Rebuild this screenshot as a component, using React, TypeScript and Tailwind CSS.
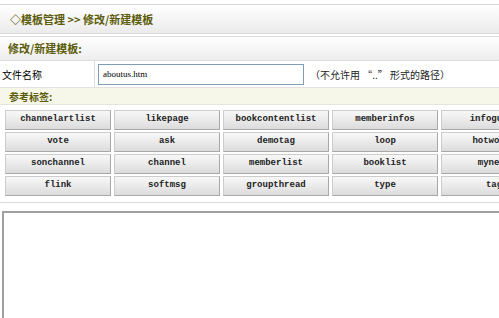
import React from 'react';

const tags: string[] = [
    'channelartlist', 'likepage', 'bookcontentlist', 'memberinfos', 'infoguide',
    'vote', 'ask', 'demotag', 'loop', 'hotwords',
    'sonchannel', 'channel', 'memberlist', 'booklist', 'mynews',
    'flink', 'softmsg', 'groupthread', 'type', 'tag',
];

const cjk = "font-['SimSun','Noto_Sans_CJK_SC',sans-serif]";

const App: React.FC = () => {
    return (
        <div className={`w-[499px] h-[318px] overflow-hidden bg-white ${cjk}`}>
            {/* top bar */}
            <div className="h-[4px] bg-white" />
            <div className="h-[30px] flex items-center pl-[10px] bg-gradient-to-b from-[#ffffff] to-[#ebebeb] border-y border-[#d9d9d9] text-[11px] font-bold text-[#5c5c0a]">
                ◇模板管理 &gt;&gt; 修改/新建模板
            </div>
            <div className="h-[2px] bg-white" />

            {/* section title */}
            <div className="h-[25px] flex items-center pl-[8px] bg-gradient-to-b from-[#ffffff] to-[#ededed] border-y border-[#dcdcdc] text-[11px] font-bold text-[#5c5c0a]">
                修改/新建模板:
            </div>

            {/* file name row */}
            <div className="h-[27px] flex border-b border-[#e2e2e2]">
                <div className="w-[95px] border-r border-[#dcdcdc] flex items-center pl-[2px] text-[10px] text-black">
                    文件名称
                </div>
                <div className="flex-1 flex items-center pl-[3px]">
                    <input
                        type="text"
                        defaultValue="aboutus.htm"
                        className="w-[206px] h-[21px] px-[4px] border border-[#7f9db9] bg-white text-[9px] text-black font-['Liberation_Serif',serif] focus:outline-none"
                    />
                    <span className="ml-[6px] text-[10px] text-[#222]">（不允许用 “..” 形式的路径）</span>
                </div>
            </div>

            {/* tags title */}
            <div className="h-[17px] flex items-center pl-[9px] bg-[#f7f7e9] border-b border-[#e6e6d6] text-[10px] font-bold text-[#5c5c0a]">
                参考标签:
            </div>

            {/* tag buttons */}
            <div className="pl-[5px] pt-[5px] pb-[6px] grid grid-cols-[repeat(5,106px)] gap-x-[3px] gap-y-[2px] border-b border-[#dadada]">
                {tags.map((t) => (
                    <button
                        key={t}
                        type="button"
                        className="h-[20px] bg-gradient-to-b from-[#f8f8f8] to-[#dcdcdc] border border-[#cccccc] border-b-[#a8a8a8] border-r-[#a8a8a8] text-[9px] text-[#222] font-['Liberation_Mono',monospace] font-bold flex items-center justify-center"
                    >
                        {t}
                    </button>
                ))}
            </div>

            <div className="h-[8px] bg-white" />

            {/* editor area */}
            <div className="ml-[2px] h-[120px] border-t-2 border-l-2 border-[#a0a0a0] bg-white" />
        </div>
    );
};

export default App;
